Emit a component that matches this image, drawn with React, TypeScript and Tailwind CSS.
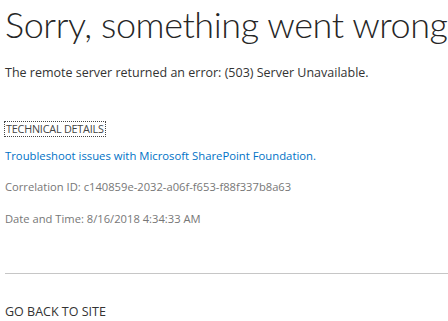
export default function App() {
  return (
    <div className="w-[448px] h-[321px] overflow-hidden bg-white pl-[5px]" style={{ fontFamily: '"Open Sans", "Noto Sans", sans-serif' }}>
      <h1 className="text-[36px] font-light leading-[44px] tracking-[-0.42px] text-[#262626] whitespace-nowrap mt-[2px]" style={{ fontFamily: 'Lato, "Open Sans", sans-serif' }}>Sorry, something went wrong</h1>
      <p className="text-[12.5px] leading-[17px] text-[#333333] mt-[18px]">The remote server returned an error: (503) Server Unavailable.</p>
      <div className="mt-[41px] flex">
        <span className="text-[10.8px] leading-[14px] tracking-[-0.2px] text-[#444444] outline outline-1 outline-dotted outline-[#444444] px-px">TECHNICAL DETAILS</span>
      </div>
      <p className="text-[11.3px] leading-[17px] text-[#0072c6] mt-[11px]">Troubleshoot issues with Microsoft SharePoint Foundation.</p>
      <p className="text-[11.2px] leading-[17px] text-[#777777] mt-[14px]">Correlation ID: c140859e-2032-a06f-f653-f88f337b8a63</p>
      <p className="text-[11.2px] leading-[17px] text-[#777777] mt-[15px]">Date and Time: 8/16/2018 4:34:33 AM</p>
      <div className="mt-[46px] h-px bg-[#c6c6c6]" />
      <p className="text-[12.5px] leading-[17px] text-[#333333] mt-[29px]">GO BACK TO SITE</p>
    </div>
  );
}
